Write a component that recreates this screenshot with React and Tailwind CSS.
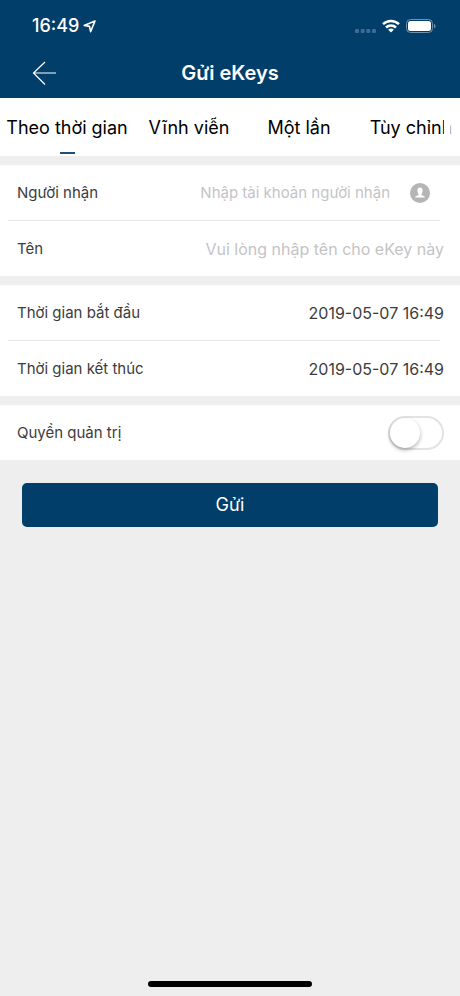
import React, { useState } from 'react';

const tabs = [
  { id: 'timed', label: 'Theo thời gian', width: 'w-[134px]' },
  { id: 'permanent', label: 'Vĩnh viễn', width: 'w-[110px]' },
  { id: 'once', label: 'Một lần', width: 'w-[110px]' },
  { id: 'custom', label: 'Tùy chỉnh', width: 'w-[114px]' },
];

function StatusBar() {
  return (
    <div className="flex h-12 items-center justify-between pt-1 pr-6 pl-8">
      <div className="flex items-center gap-1">
        <span className="text-lg leading-6 font-medium">16:49</span>
        <svg width="13" height="13" viewBox="0 0 13 13" fill="none" stroke="currentColor" strokeWidth="1.6" strokeLinejoin="round">
          <path d="M12 1 1.200 5.400 6.500 6.400 7.600 11.600z" />
        </svg>
      </div>
      <div className="flex items-center gap-[6px]">
        <svg width="21" height="14" viewBox="0 0 21 14" fill="#3c6c8f">
          <rect x="0" y="10" width="4" height="4" rx="1" />
          <rect x="5.700" y="10" width="4" height="4" rx="1" />
          <rect x="11.300" y="10" width="4" height="4" rx="1" />
          <rect x="17" y="10" width="4" height="4" rx="1" />
        </svg>
        <svg width="18" height="14" viewBox="0 0 18 14" fill="none" stroke="currentColor" strokeWidth="2.500">
          <path d="M1 5.200a11.400 11.400 0 0 1 16 0" />
          <path d="M4 8.500a7.100 7.100 0 0 1 10 0" />
          <path d="M9 13.600 6.200 10.700a3.900 3.900 0 0 1 5.600 0z" fill="currentColor" stroke="none" />
        </svg>
        <svg width="30" height="14" viewBox="0 0 30 14" fill="none">
          <rect x="0.5" y="0.5" width="26" height="13" rx="4" stroke="#6f93ac" />
          <rect x="2" y="2" width="23" height="10" rx="2.500" fill="currentColor" />
          <path d="M28 5v4.400c1-.4 1.500-1.200 1.500-2.200S29 5.400 28 5z" fill="#6f93ac" />
        </svg>
      </div>
    </div>
  );
}

function Row({ id, label, children }) {
  return (
    <div className="flex h-[55px] items-center pr-4 pl-[17px]">
      <label htmlFor={id} className="shrink-0 text-[15px] leading-6">{label}</label>
      {children}
    </div>
  );
}

function Divider() {
  return <div className="mr-5 ml-2 h-px bg-[#e6e6e6]" />;
}

function App() {
  const [activeTab, setActiveTab] = useState('timed');
  const [account, setAccount] = useState('');
  const [name, setName] = useState('');
  const [isAdmin, setIsAdmin] = useState(false);

  return (
    <div className="flex min-h-screen flex-col bg-[#eeeeee] font-['Inter','Noto_Sans',sans-serif] text-[#3c3c3c]">
      <header className="bg-[#013e69] text-white">
        <StatusBar />
        <div className="grid h-[50px] grid-cols-[1fr_auto_1fr] items-center">
          <button type="button" aria-label="Quay lại" className="ml-8 justify-self-start">
            <svg width="25" height="24" viewBox="0 0 25 24" fill="none" stroke="currentColor" strokeWidth="1.2">
              <path d="M24 12H1M13 1 1.500 12 13 23.500" />
            </svg>
          </button>
          <h1 className="text-xl font-semibold">Gửi eKeys</h1>
        </div>
      </header>

      <nav className="relative flex h-[58px] overflow-hidden bg-white text-black">
        {tabs.map((tab) => (
          <button
            key={tab.id}
            type="button"
            onClick={() => setActiveTab(tab.id)}
            className={`flex shrink-0 flex-col items-center pt-4 text-lg whitespace-nowrap ${tab.width}`}
          >
            {tab.label}
            {activeTab === tab.id && <span className="mt-[10px] h-[2px] w-[15px] bg-[#1d4f7c]" />}
          </button>
        ))}
        <div className="absolute inset-y-0 right-[10px] w-[6px] bg-white" />
        <div className="absolute inset-y-0 right-0 w-[10px] bg-white/70" />
      </nav>

      <main className="mt-[9px] flex flex-col gap-[9px]">
        <section className="bg-white">
          <Row id="account" label="Người nhận">
            <input
              id="account"
              type="text"
              value={account}
              onChange={(e) => setAccount(e.target.value)}
              placeholder="Nhập tài khoản người nhận"
              className="min-w-0 flex-1 text-right text-[15px] leading-6 outline-none placeholder:text-[#c4c4c6]"
            />
            <button type="button" aria-label="Chọn từ danh bạ" className="mr-[14px] ml-5">
              <svg width="20" height="20" viewBox="0 0 20 20">
                <circle cx="10" cy="10" r="10" fill="#b5b5b5" />
                <path d="M10 4.500c-1.800 0-2.600 1.200-2.600 2.900 0 1.500.4 2.600 1.100 3.300v1.500c-1.700.5-3.300.6-3.300 2.300h9.600c0-1.700-1.600-1.800-3.300-2.300v-1.500c.7-.7 1.100-1.800 1.100-3.300 0-1.700-.8-2.900-2.600-2.900z" fill="#fff" />
              </svg>
            </button>
          </Row>
          <Divider />
          <Row id="name" label="Tên">
            <input
              id="name"
              type="text"
              value={name}
              onChange={(e) => setName(e.target.value)}
              placeholder="Vui lòng nhập tên cho eKey này"
              className="min-w-0 flex-1 text-right text-base outline-none placeholder:text-[#c4c4c6]"
            />
          </Row>
        </section>

        <section className="bg-white">
          <Row id="start" label="Thời gian bắt đầu">
            <input id="start" type="text" readOnly value="2019-05-07 16:49" className="min-w-0 flex-1 text-right text-base outline-none" />
          </Row>
          <Divider />
          <Row id="end" label="Thời gian kết thúc">
            <input id="end" type="text" readOnly value="2019-05-07 16:49" className="min-w-0 flex-1 text-right text-base outline-none" />
          </Row>
        </section>

        <section className="bg-white">
          <Row id="admin" label="Quyền quản trị">
            <input
              id="admin"
              type="checkbox"
              role="switch"
              checked={isAdmin}
              onChange={(e) => setIsAdmin(e.target.checked)}
              className="ml-auto flex h-[34px] w-14 cursor-pointer appearance-none items-center rounded-full border-2 border-[#e3e3e3] bg-white before:size-[30px] before:rounded-full before:bg-white before:shadow-[0_2px_4px_rgba(0,0,0,0.3)] before:content-[''] checked:justify-end checked:bg-[#013e69]"
            />
          </Row>
        </section>
      </main>

      <button type="button" className="mx-[22px] mt-[23px] h-11 rounded-[5px] bg-[#013e69] text-lg text-white">
        Gửi
      </button>

      <div className="mx-auto mt-auto mb-[9px] h-[6px] w-[164px] rounded-full bg-black" />
    </div>
  );
}

export default App;
